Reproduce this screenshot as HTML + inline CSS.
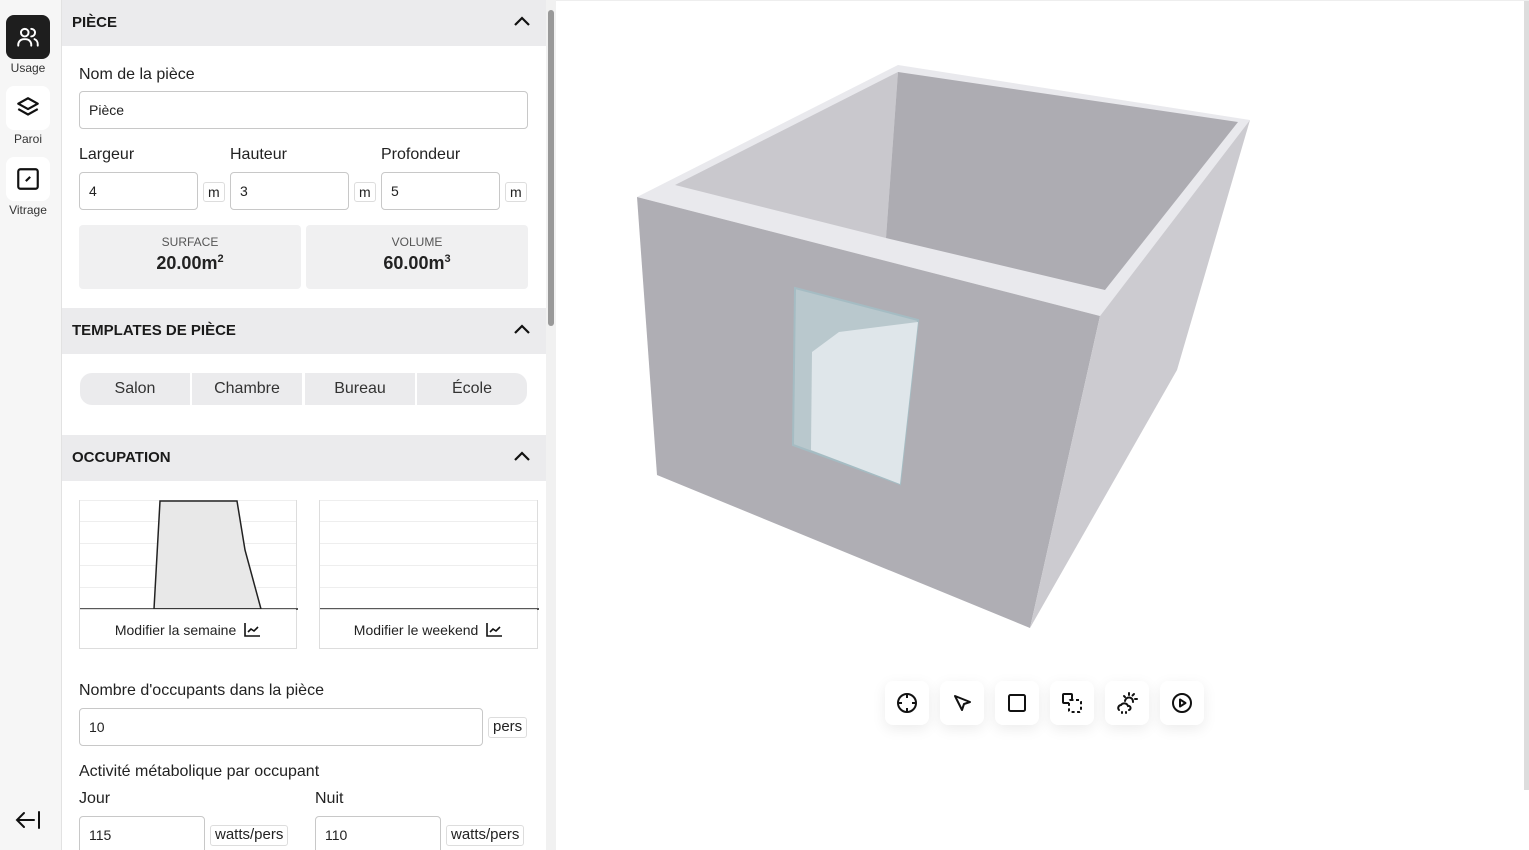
<!DOCTYPE html>
<html><head><meta charset="utf-8"><style>
*{box-sizing:border-box;margin:0;padding:0}
body{width:1529px;height:850px;overflow:hidden;background:#fff;font-family:"Liberation Sans",sans-serif;color:#222;position:relative}
.side{position:absolute;left:0;top:0;width:62px;height:850px;background:#f6f6f6;border-right:1px solid #e2e2e2}
.nb{position:absolute;left:6px;width:44px;height:44px;border-radius:8px;background:#fff;display:flex;align-items:center;justify-content:center}
.nl{position:absolute;left:0;width:56px;text-align:center;font-size:12px;color:#333}
.panel{position:absolute;left:62px;top:0;width:484px;height:850px;background:#fff;overflow:hidden}
.hd{position:absolute;left:0;width:484px;height:46px;background:#ebebed;font-weight:bold;font-size:15px;padding-left:10px;line-height:46px;color:#1a1a1a}
.hd svg{position:absolute;right:16px;top:16px}
.lbl{position:absolute;font-size:16px;color:#222}
.inp{position:absolute;height:38px;border:1px solid #c8c8c8;border-radius:4px;font-size:14px;padding-left:9px;line-height:36px;background:#fff}
.unit{position:absolute;height:20px;border:1px solid #ddd;border-radius:3px;font-size:14px;padding:0 4px;line-height:18px;background:#fff}
.stat{position:absolute;top:225px;height:64px;width:222px;background:#f0f0f1;border-radius:4px;text-align:center}
.stat .a{font-size:12px;color:#555;margin-top:10px}
.stat .b{font-size:18px;font-weight:bold;margin-top:4px}
.tp{position:absolute;top:373px;height:32px;background:#ebebed;font-size:16px;text-align:center;line-height:32px;color:#333}
.chart{position:absolute;top:500px;width:218px;height:149px;border:1px solid #ddd;border-top:none}
.chart .g{position:absolute;left:0;right:0;height:1px;background:#eee}
.chart .btn{position:absolute;bottom:0;left:0;right:0;height:39px;border-top:1px solid #ddd;font-size:14px;text-align:center;line-height:40px}
.sb{position:absolute;left:546px;top:0;width:10px;height:850px;background:#f1f1f1}
.tb{position:absolute;top:681px;width:44px;height:44px;border-radius:8px;background:#fff;box-shadow:0 4px 14px rgba(0,0,0,.08);display:flex;align-items:center;justify-content:center}
</style></head><body>
<div class="side">
 <div class="nb" style="top:15px;background:#1e1e1e"><svg width="26" height="26" viewBox="0 0 24 24" fill="none" stroke="#fff" stroke-width="1.8" stroke-linecap="round"><circle cx="9" cy="8" r="3.5"/><path d="M3 20v-1a5 5 0 0 1 5-5h2a5 5 0 0 1 5 5v1"/><path d="M15 4.5a3.5 3.5 0 0 1 0 7"/><path d="M18 14a5 5 0 0 1 3 5v1"/></svg></div>
 <div class="nl" style="top:61px">Usage</div>
 <div class="nb" style="top:86px"><svg width="26" height="26" viewBox="0 0 24 24" fill="none" stroke="#111" stroke-width="2" stroke-linejoin="round"><path d="M12 3 3 8l9 5 9-5z"/><path d="M3 13l9 5 9-5"/></svg></div>
 <div class="nl" style="top:132px">Paroi</div>
 <div class="nb" style="top:157px"><svg width="26" height="26" viewBox="0 0 24 24" fill="none" stroke="#111" stroke-width="2"><rect x="3" y="3" width="18" height="18" rx="2"/><path d="M10 14l4-4"/></svg></div>
 <div class="nl" style="top:203px">Vitrage</div>
 <svg style="position:absolute;left:15px;top:810px" width="26" height="20" viewBox="0 0 26 20" fill="none" stroke="#111" stroke-width="2" stroke-linecap="round"><path d="M2 10h17M9 3 2 10l7 7M24 2v16"/></svg>
</div>
<div class="panel">
 <div class="hd" style="top:0">PIÈCE<svg width="16" height="10" viewBox="0 0 16 10" fill="none" stroke="#111" stroke-width="2.2"><path d="M1 9l7-7 7 7"/></svg></div>
 <div class="lbl" style="left:17px;top:66px">Nom de la pièce</div>
 <div class="inp" style="left:17px;top:91px;width:449px">Pièce</div>
 <div class="lbl" style="left:17px;top:146px">Largeur</div>
 <div class="lbl" style="left:168px;top:146px">Hauteur</div>
 <div class="lbl" style="left:319px;top:146px">Profondeur</div>
 <div class="inp" style="left:17px;top:172px;width:119px">4</div><div class="unit" style="left:141px;top:182px">m</div>
 <div class="inp" style="left:168px;top:172px;width:119px">3</div><div class="unit" style="left:292px;top:182px">m</div>
 <div class="inp" style="left:319px;top:172px;width:119px">5</div><div class="unit" style="left:443px;top:182px">m</div>
 <div class="stat" style="left:17px"><div class="a">SURFACE</div><div class="b">20.00m<sup style="font-size:11px">2</sup></div></div>
 <div class="stat" style="left:244px"><div class="a">VOLUME</div><div class="b">60.00m<sup style="font-size:11px">3</sup></div></div>
 <div class="hd" style="top:308px">TEMPLATES DE PIÈCE<svg width="16" height="10" viewBox="0 0 16 10" fill="none" stroke="#111" stroke-width="2.2"><path d="M1 9l7-7 7 7"/></svg></div>
 <div class="tp" style="left:18px;width:110px;border-radius:12px 0 0 12px">Salon</div>
 <div class="tp" style="left:130px;width:110px">Chambre</div>
 <div class="tp" style="left:243px;width:110px">Bureau</div>
 <div class="tp" style="left:355px;width:110px;border-radius:0 12px 12px 0">École</div>
 <div class="hd" style="top:435px">OCCUPATION<svg width="16" height="10" viewBox="0 0 16 10" fill="none" stroke="#111" stroke-width="2.2"><path d="M1 9l7-7 7 7"/></svg></div>
 <div class="chart" style="left:17px"><div class="g" style="top:0"></div><div class="g" style="top:21px"></div><div class="g" style="top:43px"></div><div class="g" style="top:65px"></div><div class="g" style="top:87px"></div>
  <svg style="position:absolute;left:0;top:0" width="218" height="110"><path d="M74 109L80 1H157L165 50L181 109Z" fill="#e8e8e8" stroke="#222" stroke-width="1.5"/><path d="M0 109H218" stroke="#222" stroke-width="1.5"/></svg>
  <div class="btn">Modifier la semaine <svg width="17" height="15" viewBox="0 0 17 15" fill="none" stroke="#111" stroke-width="1.6" style="vertical-align:-2px;margin-left:4px"><path d="M1 1v13h15M4 10l3-3 3 2 4-4"/></svg></div></div>
 <div class="chart" style="left:257px;width:219px"><div class="g" style="top:0"></div><div class="g" style="top:21px"></div><div class="g" style="top:43px"></div><div class="g" style="top:65px"></div><div class="g" style="top:87px"></div>
  <svg style="position:absolute;left:0;top:0" width="219" height="110"><path d="M0 109H219" stroke="#222" stroke-width="1.5"/></svg>
  <div class="btn">Modifier le weekend <svg width="17" height="15" viewBox="0 0 17 15" fill="none" stroke="#111" stroke-width="1.6" style="vertical-align:-2px;margin-left:4px"><path d="M1 1v13h15M4 10l3-3 3 2 4-4"/></svg></div></div>
 <div class="lbl" style="left:17px;top:682px">Nombre d'occupants dans la pièce</div>
 <div class="inp" style="left:17px;top:708px;width:404px">10</div><div class="unit" style="left:426px;top:717px;font-size:15px;height:21px">pers</div>
 <div class="lbl" style="left:17px;top:763px">Activité métabolique par occupant</div>
 <div class="lbl" style="left:17px;top:790px">Jour</div>
 <div class="lbl" style="left:253px;top:790px">Nuit</div>
 <div class="inp" style="left:17px;top:816px;width:126px">115</div><div class="unit" style="left:148px;top:825px;font-size:15px;height:21px">watts/pers</div>
 <div class="inp" style="left:253px;top:816px;width:126px">110</div><div class="unit" style="left:384px;top:825px;font-size:15px;height:21px">watts/pers</div>
</div>
<div class="sb"><div style="position:absolute;left:2px;top:10px;width:6px;height:316px;background:#999;border-radius:3px"></div></div>
<div style="position:absolute;left:1524px;top:0;width:5px;height:790px;background:#ddd"></div>
<div style="position:absolute;left:556px;top:0;width:973px;height:1px;background:#eee"></div>
<svg style="position:absolute;left:0;top:0" width="1529" height="850">
 <polygon points="637,197 898,65 1250,120 1100,316" fill="#e9e9ed"/>
 <polygon points="675,185 898,72 886,238" fill="#c9c8cd"/>
 <polygon points="898,72 1238,122 1105,290 886,238" fill="#adacb2"/>
 <polygon points="637,197 1100,316 1030,628 657,475" fill="#afaeb4"/>
 <polygon points="1100,316 1250,120 1177,370 1030,628" fill="#cccbd0"/>
 <polygon points="795,288 918,320 900,484 793,445" fill="#b9c8cd" stroke="#a5bcc3" stroke-width="2"/>
 <polygon points="839,332 918,322 900,484 811,450 812,352" fill="#dfe6ea"/>
</svg>
<div class="tb" style="left:885px"><svg width="24" height="24" viewBox="0 0 24 24" fill="none" stroke="#111" stroke-width="2"><circle cx="12" cy="12" r="9"/><path d="M12 3v4M12 17v4M3 12h4M17 12h4"/></svg></div>
<div class="tb" style="left:940px"><svg width="24" height="24" viewBox="0 0 24 24" fill="none" stroke="#111" stroke-width="2" stroke-linejoin="round"><path d="M5 5l15 6-6 2-2 6z"/></svg></div>
<div class="tb" style="left:995px"><svg width="24" height="24" viewBox="0 0 24 24" fill="none" stroke="#111" stroke-width="2"><rect x="4" y="4" width="16" height="16" rx="1.5"/></svg></div>
<div class="tb" style="left:1050px"><svg width="24" height="24" viewBox="0 0 24 24" fill="none" stroke="#111" stroke-width="2"><path d="M12 9V4a1 1 0 0 0-1-1H4a1 1 0 0 0-1 1v7a1 1 0 0 0 1 1h5"/><rect x="9" y="9" width="12" height="12" rx="1.5" stroke-dasharray="3 2.5"/></svg></div>
<div class="tb" style="left:1105px"><svg width="24" height="24" viewBox="0 0 24 24" fill="none" stroke="#111" stroke-width="2" stroke-linecap="round"><path d="M14 2v2M20 8h2M19 3l-1.5 1.5M9 5l1 1"/><path d="M10 10a4 4 0 0 1 8 1"/><path d="M4 19a3 3 0 0 1 2-5 4 4 0 0 1 7 1 2 2 0 0 1 1 4"/><path d="M7 21v1M11 21v1"/></svg></div>
<div class="tb" style="left:1160px"><svg width="24" height="24" viewBox="0 0 24 24" fill="none" stroke="#111" stroke-width="2" stroke-linejoin="round"><circle cx="12" cy="12" r="9"/><path d="M10 8.5v7l5.5-3.5z"/></svg></div>
</body></html>
